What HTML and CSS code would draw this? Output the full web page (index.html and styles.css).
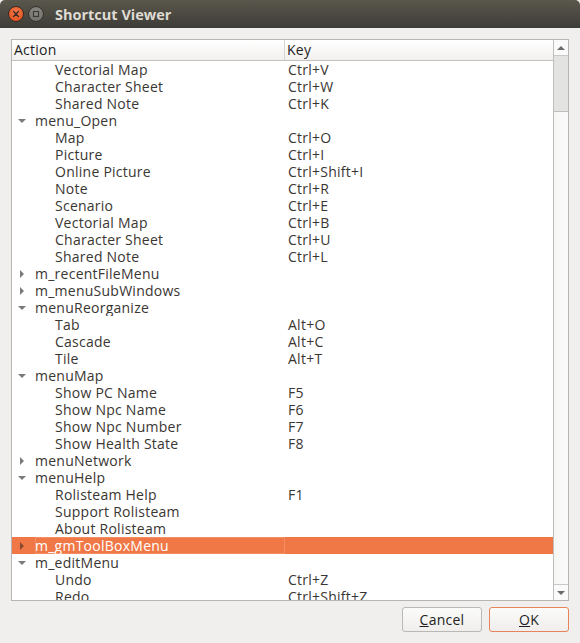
FILE: index.html
```html
<!DOCTYPE html>
<html>
<head>
<meta charset="utf-8">
<link rel="stylesheet" href="styles.css">
</head>
<body>
<div class="window">
  <div class="titlebar">
    <span class="btn-close"><svg width="14" height="14" viewBox="0 0 14 14"><path d="M4.6 4.6 L9.4 9.4 M9.4 4.6 L4.6 9.4" stroke="#3b2a22" stroke-width="1.4" stroke-linecap="round"/></svg></span>
    <span class="btn-max"><svg width="14" height="14" viewBox="0 0 14 14"><rect x="4.5" y="4.5" width="5" height="5" fill="none" stroke="#3a3a36" stroke-width="1.2"/></svg></span>
    <span class="title">Shortcut Viewer</span>
  </div>
  <div class="content">
    <div class="tree">
      <div class="view">
        <div class="header">
          <div class="hcol hcol-action">Action</div>
          <div class="hcol hcol-key">Key</div>
        </div>
        <div class="rows">
          <div class="row child"><span class="a">Vectorial Map</span><span class="k">Ctrl+V</span></div>
          <div class="row child"><span class="a">Character Sheet</span><span class="k">Ctrl+W</span></div>
          <div class="row child"><span class="a">Shared Note</span><span class="k">Ctrl+K</span></div>
          <div class="row top"><span class="arrow down"></span><span class="a">menu_Open</span><span class="k"></span></div>
          <div class="row child"><span class="a">Map</span><span class="k">Ctrl+O</span></div>
          <div class="row child"><span class="a">Picture</span><span class="k">Ctrl+I</span></div>
          <div class="row child"><span class="a">Online Picture</span><span class="k">Ctrl+Shift+I</span></div>
          <div class="row child"><span class="a">Note</span><span class="k">Ctrl+R</span></div>
          <div class="row child"><span class="a">Scenario</span><span class="k">Ctrl+E</span></div>
          <div class="row child"><span class="a">Vectorial Map</span><span class="k">Ctrl+B</span></div>
          <div class="row child"><span class="a">Character Sheet</span><span class="k">Ctrl+U</span></div>
          <div class="row child"><span class="a">Shared Note</span><span class="k">Ctrl+L</span></div>
          <div class="row top"><span class="arrow right"></span><span class="a">m_recentFileMenu</span><span class="k"></span></div>
          <div class="row top"><span class="arrow right"></span><span class="a">m_menuSubWindows</span><span class="k"></span></div>
          <div class="row top"><span class="arrow down"></span><span class="a">menuReorganize</span><span class="k"></span></div>
          <div class="row child"><span class="a">Tab</span><span class="k">Alt+O</span></div>
          <div class="row child"><span class="a">Cascade</span><span class="k">Alt+C</span></div>
          <div class="row child"><span class="a">Tile</span><span class="k">Alt+T</span></div>
          <div class="row top"><span class="arrow down"></span><span class="a">menuMap</span><span class="k"></span></div>
          <div class="row child"><span class="a">Show PC Name</span><span class="k">F5</span></div>
          <div class="row child"><span class="a">Show Npc Name</span><span class="k">F6</span></div>
          <div class="row child"><span class="a">Show Npc Number</span><span class="k">F7</span></div>
          <div class="row child"><span class="a">Show Health State</span><span class="k">F8</span></div>
          <div class="row top"><span class="arrow right"></span><span class="a">menuNetwork</span><span class="k"></span></div>
          <div class="row top"><span class="arrow down"></span><span class="a">menuHelp</span><span class="k"></span></div>
          <div class="row child"><span class="a">Rolisteam Help</span><span class="k">F1</span></div>
          <div class="row child"><span class="a">Support Rolisteam</span><span class="k"></span></div>
          <div class="row child"><span class="a">About Rolisteam</span><span class="k"></span></div>
          <div class="row top selected"><span class="arrow right"></span><span class="a">m_gmToolBoxMenu</span><span class="k"></span></div>
          <div class="row top"><span class="arrow down"></span><span class="a">m_editMenu</span><span class="k"></span></div>
          <div class="row child"><span class="a">Undo</span><span class="k">Ctrl+Z</span></div>
          <div class="row child"><span class="a">Redo</span><span class="k">Ctrl+Shift+Z</span></div>
        </div>
      </div>
      <div class="scrollbar">
        <div class="sb-btn"><span class="tri-up"></span></div>
        <div class="sb-thumb"></div>
        <div class="sb-track"></div>
        <div class="sb-btn"><span class="tri-down"></span></div>
      </div>
    </div>
    <div class="buttons">
      <button class="btn"><u>C</u>ancel</button>
      <button class="btn ok"><u>O</u>K</button>
    </div>
  </div>
</div>
</body>
</html>
```
FILE: styles.css
```css
* { box-sizing: border-box; }
html, body { margin: 0; padding: 0; }
body {
  width: 580px;
  height: 643px;
  overflow: hidden;
  background: #f0efed;
  font-family: "Open Sans", "DejaVu Sans", sans-serif;
  font-size: 14px;
  letter-spacing: 0.25px;
  color: #3a3632;
}
.window { display: flex; flex-direction: column; height: 643px; }
.titlebar {
  height: 28px;
  flex: none;
  display: flex;
  align-items: center;
  background: linear-gradient(#5a574c, #3d3c37);
  border-radius: 5px 5px 0 0;
  padding-left: 8px;
}
.btn-close, .btn-max {
  width: 16px; height: 16px; border-radius: 50%;
  display: flex; align-items: center; justify-content: center;
}
.btn-close {
  background: radial-gradient(circle at 50% 35%, #f4794a, #df4a17);
  border: 1px solid #3a2c24;
}
.btn-max {
  margin-left: 4px;
  background: radial-gradient(circle at 50% 35%, #8d8b84, #6c6a64);
  border: 1px solid #34332e;
}
.title {
  margin-left: 11px;
  color: #dfdbd2;
  font-weight: bold;
  font-size: 14.5px;
  letter-spacing: 0;
}
.content {
  flex: 1;
  display: flex;
  flex-direction: column;
  padding: 11px 11px 12px 11px;
}
.tree {
  height: 562px;
  border: 1px solid #b6b5b2;
  background: #ffffff;
  display: flex;
  overflow: hidden;
}
.view { flex: 1; overflow: hidden; min-width: 0; }
.header {
  display: flex;
  height: 21px;
  border-bottom: 1px solid #c3c2bf;
  background: linear-gradient(#ffffff, #f1f0ee);
}
.hcol { line-height: 20px; padding-left: 2px; color: #1e1e1e; }
.hcol-action { width: 273px; border-right: 1px solid #d6d5d2; }
.hcol-key { flex: 1; padding-left: 2px; }
.rows { display: flex; flex-direction: column; }
.row {
  display: flex;
  align-items: center;
  height: 17px;
  line-height: 17px;
  white-space: nowrap;
  overflow: hidden;
}
.row .a { width: 273px; flex: none; height: 17px; overflow: hidden; }
.row .k { flex: 1; padding-left: 3px; height: 17px; overflow: hidden; }
.row.child .a { padding-left: 43px; }
.row.top .a { width: 250px; }
.arrow { width: 23px; flex: none; display: flex; justify-content: flex-start; align-items: center; }
.arrow.down::before {
  content: "";
  margin-left: 6px;
  border-left: 4px solid transparent;
  border-right: 4px solid transparent;
  border-top: 4px solid #7a7a7a;
}
.arrow.right::before {
  content: "";
  margin-left: 8px;
  border-top: 4px solid transparent;
  border-bottom: 4px solid transparent;
  border-left: 4px solid #7a7a7a;
}
.row.selected { background: #f07746; color: #ffffff; }
.row.selected .arrow.right::before { border-left-color: #8a4a30; }
.row.selected .a { box-shadow: inset 0 0 0 1px #f38d62; }
.scrollbar {
  width: 15px;
  flex: none;
  border-left: 1px solid #c0bfbc;
  display: flex;
  flex-direction: column;
  background: linear-gradient(90deg, #f6f6f5, #fbfbfb);
}
.sb-btn {
  height: 15px;
  flex: none;
  display: flex;
  align-items: center;
  justify-content: center;
  background: #fafafa;
}
.tri-up { border-left: 4px solid transparent; border-right: 4px solid transparent; border-bottom: 4px solid #6a6a6a; }
.tri-down { border-left: 4px solid transparent; border-right: 4px solid transparent; border-top: 4px solid #6a6a6a; }
.sb-thumb {
  height: 57px;
  flex: none;
  background: #e3e3e2;
  border-top: 1px solid #c8c8c6;
  border-bottom: 1px solid #c0bfbc;
}
.sb-track { flex: 1; border-bottom: 1px solid #c8c8c6; }
.buttons {
  display: flex;
  justify-content: flex-end;
  gap: 7px;
  margin-top: 6px;
}
.btn {
  width: 80px;
  height: 25px;
  font-family: inherit;
  font-size: 14px;
  letter-spacing: 0.25px;
  color: #1e1e1e;
  background: linear-gradient(#fbfbfa, #efeeec);
  border: 1px solid #b9b8b5;
  border-radius: 3px;
  padding: 0;
}
.btn.ok { border-color: #e9845a; }
```
